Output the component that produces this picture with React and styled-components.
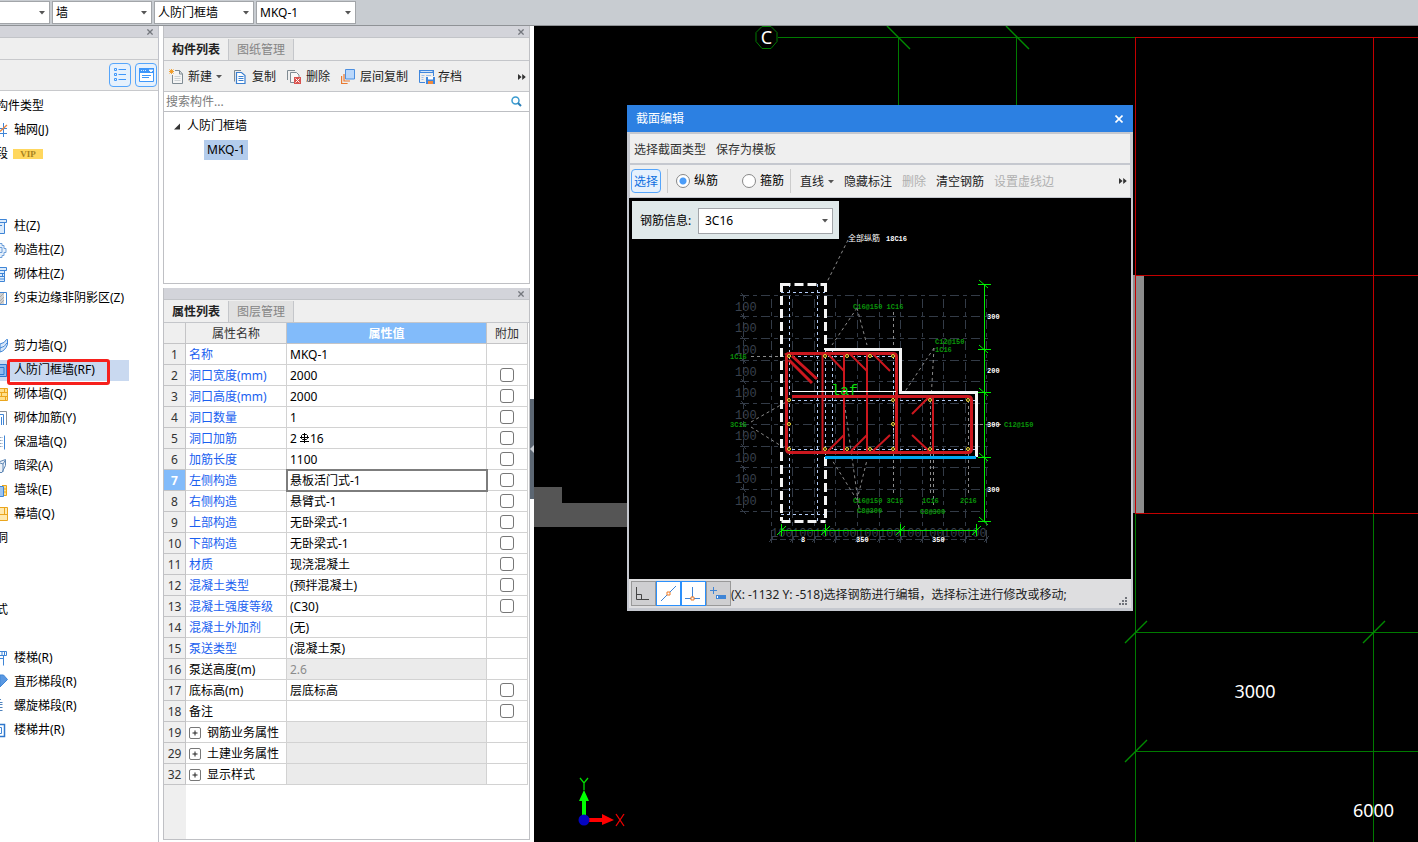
import React from "react";
import styled, { createGlobalStyle, css } from "styled-components";

const GlobalStyle = createGlobalStyle`
  *, *::before, *::after { box-sizing: border-box; }
  body {
    margin: 0;
    background: #fff;
    color: #000;
    font: 12px/16px "Noto Sans", "Noto Sans CJK SC", sans-serif;
  }
  button, input, select { font: inherit; color: inherit; margin: 0; }
  button { padding: 0; border: 0; background: none; white-space: nowrap; }
  ul { list-style: none; margin: 0; padding: 0; }
`;

/* ---------- shell ---------- */

const Shell = styled.div`
  display: flex;
  flex-direction: column;
  min-height: 100vh;
  overflow: hidden;
`;

const TopBar = styled.header`
  display: flex;
  gap: 2px;
  height: 26px;
  margin-left: -50px;
  padding-top: 1px;
  background: #c8ccd1;
  border-bottom: 1px solid #8f9296;
`;

const Workspace = styled.main`
  display: flex;
  flex: 1;
`;

const ComboFrame = styled.div`
  position: relative;
  width: ${(p) => p.$width}px;
  height: ${(p) => p.$height}px;
`;

const ComboSelect = styled.select`
  appearance: none;
  width: 100%;
  height: 100%;
  padding: 0 14px 0 ${(p) => p.$indent}px;
  border: 1px solid #a2a5a9;
  border-radius: 0;
  background: #fff;
`;

const ComboCaret = styled.svg`
  position: absolute;
  right: 5px;
  top: calc(50% - 2px);
  pointer-events: none;
`;

function Combo({ label, value, width = 100, height = 23, indent = 3, id }) {
  return (
    <ComboFrame $width={width} $height={height}>
      <ComboSelect aria-label={label} id={id} $indent={indent} defaultValue={value}>
        <option>{value}</option>
      </ComboSelect>
      <ComboCaret width="6" height="4" viewBox="0 0 6 4">
        <path d="M0 0h6L3 3.600z" fill="#555" />
      </ComboCaret>
    </ComboFrame>
  );
}

const PanelStrip = styled.div`
  display: flex;
  justify-content: flex-end;
  align-items: center;
  height: 12px;
  padding: 1px 5px 0 0;
  background: #d3d4da;
  border-bottom: 1px solid #c2c4c8;
`;

const CloseButton = styled.button`
  display: flex;
`;

function Strip({ name }) {
  return (
    <PanelStrip>
      <CloseButton aria-label={`关闭${name}`}>
        <svg width="6" height="6" viewBox="0 0 6 6">
          <path d="M.4.4l5.200 5.200M5.600.4L.4 5.600" stroke="#74777d" strokeWidth="1.300" />
        </svg>
      </CloseButton>
    </PanelStrip>
  );
}

/* ---------- left navigation ---------- */

const NavPanel = styled.aside`
  width: 159px;
  flex: none;
  overflow: hidden;
  border-right: 1px solid #bfc1c9;
  background: #fff;
`;

const NavHeading = styled.div`
  height: 22px;
  background: #efefef;
  border-bottom: 1px solid #c8c9cc;
`;

const NavTools = styled.div`
  display: flex;
  justify-content: flex-end;
  align-items: center;
  gap: 4px;
  height: 31px;
  padding-right: 1px;
  background: #efefef;
  border-bottom: 1px solid #c8c9cc;
`;

const ViewButton = styled.button`
  display: flex;
  align-items: center;
  justify-content: center;
  width: 22px;
  height: 24px;
  border: 1px solid #55a5fb;
  border-radius: 4px;
  background: #e6f1fd;
`;

const NavList = styled.ul`
  margin-top: 3px;
`;

const NavItem = styled.li`
  position: relative;
  display: flex;
  align-items: center;
  gap: 5px;
  height: 24px;
  white-space: nowrap;
`;

const NavGroup = styled(NavItem)`
  margin-left: -4px;
`;

const NavHighlight = styled.span`
  display: flex;
  align-items: center;
  gap: 5px;
  width: 129px;
  height: 21px;
  background: #c9d9f0;
`;

const Marker = styled.span`
  position: absolute;
  left: 7px;
  top: 1px;
  width: 103px;
  height: 26px;
  border: 3px solid #f6201c;
  border-radius: 3px;
`;

const VipBadge = styled.span`
  width: 30px;
  height: 10px;
  background: #ffd75e;
  color: #a8821f;
  font: bold 9px/10px "Liberation Serif", serif;
  text-align: center;
`;

const B = "#3f85d6";
const navGlyphs = {
  grid: (
    <g fill="none">
      <path d="M3.500 1v14M0 6.500h7M0 11.500h7" stroke={B} />
      <path d="M0 9.500L7 3" stroke="#e9833c" strokeWidth="1.300" />
    </g>
  ),
  column: <path d="M0 1.500h6.500v3H0M0 4.500h4.500v11H0M0 7.500h2" fill="#dcebfb" stroke={B} />,
  ring: <path d="M0 1.500h2v2h2v3h2v4H4v3H2v2H0M0 5.500h2v5H0" fill="#e6f0fb" stroke="#6e9fd9" />,
  brickColumn: (
    <g>
      <path d="M0 1.500h6.500v3H0M0 4.500h4.500v11H0" fill="#dcebfb" stroke={B} />
      <path d="M0 7.500h4M0 10.500h4M2.500 7v3M0 13h4" stroke={B} />
    </g>
  ),
  hatch: (
    <g>
      <path d="M0 2.500h6.500v12H0" fill="#fff" stroke={B} />
      <path d="M0 3h4v11H0z" fill="#cfcfcf" />
      <path d="M0 7l4-4M0 11l4-4M0 14l4-4" stroke="#999" strokeWidth=".7" />
    </g>
  ),
  curve: <path d="M0 6q5-1 6.500-4.500h1v5Q5 13 0 14V6M0 10q5-1 7-5" fill="#d7e6f8" stroke={B} />,
  frame: (
    <g>
      <path d="M0 2h7v13H0z" fill="#8fbcf0" />
      <path d="M0 2.500h6.500v12H0M0 5.500h4v7H0" fill="none" stroke="#2f77cc" />
    </g>
  ),
  brick: (
    <g>
      <path d="M0 2.500h7.500v12H0" fill="#ffe08a" stroke="#eaa51d" />
      <path d="M0 6.500h7M0 10.500h7M4.500 3v4M1.500 7v4M5.500 11v3" stroke="#eaa51d" />
    </g>
  ),
  bars: (
    <g fill="none">
      <path d="M0 1.500h6.500V15" stroke="#8a9199" />
      <path d="M0 4.500h3.500V15M1.500 7v8" stroke={B} />
    </g>
  ),
  insulation: (
    <g fill="none">
      <path d="M4.500 1.500v14" stroke={B} />
      <path d="M0 3.500h3M0 6.500h3M0 9.500h3M0 12.500h3" stroke="#8ba3bf" strokeDasharray="1.500 1" />
    </g>
  ),
  beam: <path d="M0 3.500l5.500-2v6L2 14.500H0M0 5l3 1v8M3 6l2.500-4" fill="#edf2f8" stroke="#5f87b5" />,
  pier: (
    <g>
      <path d="M2 3.500h4.500v10H2" fill="#ffe08a" stroke="#eaa51d" />
      <path d="M0 4.500h3.500v10H0" fill="#9cc4f2" stroke={B} />
      <path d="M4 7h3M4 10h3" stroke="#eaa51d" />
    </g>
  ),
  curtain: (
    <g>
      <path d="M0 1.500h7.500v13H0" fill="#ffe9ae" stroke="#eaa51d" />
      <path d="M0 8.500h7M4.500 2v6" stroke="#eaa51d" />
    </g>
  ),
  stair: <path d="M0 1.500h6.500v4H0M3.500 5.500v10M0 8.500h3M2 2v3M4.500 2v3" fill="none" stroke={B} />,
  flight: <path d="M0 1l3.500 0 4 4.500L0 13z" fill="#5a98e2" stroke={B} />,
  spiral: <path d="M0 1.500h1M0 4.500h2.500M0 6.500h2.500M0 9.500h2.500M0 12.500h2.500" fill="none" stroke="#4f83bd" />,
  well: (
    <g fill="none">
      <path d="M0 2.500h4.500v12H0" stroke="#2f77cc" strokeWidth="1.500" />
      <path d="M0 5.500h1.500v6H0" stroke={B} />
    </g>
  ),
};

const navRows = [
  { group: "构件类型" },
  { icon: "grid", text: "轴网(J)" },
  { group: "段", vip: true },
  {}, {},
  { icon: "column", text: "柱(Z)" },
  { icon: "ring", text: "构造柱(Z)" },
  { icon: "brickColumn", text: "砌体柱(Z)" },
  { icon: "hatch", text: "约束边缘非阴影区(Z)" },
  {},
  { icon: "curve", text: "剪力墙(Q)" },
  { icon: "frame", text: "人防门框墙(RF)", selected: true },
  { icon: "brick", text: "砌体墙(Q)" },
  { icon: "bars", text: "砌体加筋(Y)" },
  { icon: "insulation", text: "保温墙(Q)" },
  { icon: "beam", text: "暗梁(A)" },
  { icon: "pier", text: "墙垛(E)" },
  { icon: "curtain", text: "幕墙(Q)" },
  { group: "洞" },
  {}, {},
  { group: "式" },
  {},
  { icon: "stair", text: "楼梯(R)" },
  { icon: "flight", text: "直形梯段(R)" },
  { icon: "spiral", text: "螺旋梯段(R)" },
  { icon: "well", text: "楼梯井(R)" },
];

function NavRow({ row }) {
  if (row.group) {
    return (
      <NavGroup>
        {row.group}
        {row.vip && <VipBadge>VIP</VipBadge>}
      </NavGroup>
    );
  }
  if (!row.text) return <NavItem />;
  const body = (
    <>
      <svg width="9" height="16" viewBox="0 0 9 16">{navGlyphs[row.icon]}</svg>
      <span>{row.text}</span>
    </>
  );
  return (
    <NavItem>
      {row.selected ? <NavHighlight>{body}</NavHighlight> : body}
      {row.selected && <Marker />}
    </NavItem>
  );
}

/* ---------- component list and property list ---------- */

const MiddleColumn = styled.div`
  position: relative;
  display: flex;
  flex-direction: column;
  gap: 4px;
  flex: none;
  width: 375px;
  padding: 0 4px 2px;
`;

const Panel = styled.section`
  display: flex;
  flex-direction: column;
  flex: ${(p) => (p.$grow ? 1 : "none")};
  width: 367px;
  border: 1px solid #bfc0c4;
  border-top: 0;
  background: #efefef;
`;

const Tabs = styled.div`
  display: flex;
  height: 23px;
  padding-top: 1px;
  border-bottom: 1px solid #c4c6ca;
`;

const Tab = styled.button`
  width: 65px;
  border-right: 1px solid #c4c6ca;
  color: #222;
  font-weight: 600;
  ${(p) =>
    !p.$active &&
    css`
      background: #e1e1e1;
      color: #858585;
      font-weight: 400;
    `}
`;

const Toolbar = styled.div`
  display: flex;
  align-items: center;
  gap: 11px;
  height: 31px;
  padding: 1px 3px 0 5px;
  border-bottom: 1px solid #c4c6ca;
  color: #222;
`;

const ToolButton = styled.button`
  display: flex;
  align-items: center;
  gap: 3px;
  svg { flex: none; }
`;

const MoreButton = styled(ToolButton)`
  margin-left: auto;
`;

const SearchRow = styled.label`
  display: flex;
  align-items: center;
  height: 20px;
  padding: 0 7px 0 2px;
  background: #fff;
  border-bottom: 1px solid #bdbfc3;
`;

const SearchInput = styled.input`
  flex: 1;
  min-width: 0;
  padding: 0;
  border: 0;
  outline: 0;
  background: none;
  &::placeholder { color: #7b7b7b; opacity: 1; }
`;

const Tree = styled.ul`
  min-height: 171px;
  padding: 2px 0 0 9px;
  background: #fff;
`;

const TreeRow = styled.li`
  display: flex;
  align-items: center;
  gap: 3px;
  height: 24px;
  padding-left: ${(p) => (p.$child ? 31 : 0)}px;
`;

const TreeLabel = styled.span`
  height: 20px;
  padding: 2px 3px;
  background: ${(p) => (p.$selected ? "#b3ccec" : "none")};
`;

const MoreGlyph = () => (
  <svg width="8" height="6" viewBox="0 0 8 6">
    <path d="M0 0l3.600 3L0 6zM4.200 0l3.600 3-3.600 3z" fill="#333" />
  </svg>
);

const DropGlyph = () => (
  <svg width="7" height="4" viewBox="0 0 7 4">
    <path d="M1 0h6L4 3.300z" fill="#555" />
  </svg>
);

const toolGlyphs = {
  add: (
    <g>
      <path d="M3.500 6V14.500H13.500V5L10.500 1.500H6" fill="#f4f4f4" stroke="#7f8b93" />
      <path d="M10.500 1.500V5h3" fill="none" stroke="#7f8b93" />
      <path d="M5.500 7.500h6M5.500 9.500h6M5.500 11.500h6" stroke="#ccd1d4" />
      <path d="M.5.5l4 4M4.500.5l-4 4M2.500 0v5M0 2.500h5" stroke="#f0971e" strokeWidth=".9" />
    </g>
  ),
  copy: (
    <g fill="none">
      <path d="M1.500 12.500V1.500h6.500" stroke="#7f8b93" />
      <path d="M3.500 3.500h5l3.500 3v8H3.500z" fill="#fff" stroke="#3a7fd0" strokeWidth="1.200" />
      <path d="M5.500 7.500h5M5.500 9.500h5M5.500 11.500h5" stroke="#3a7fd0" />
    </g>
  ),
  remove: (
    <g fill="none">
      <path d="M.5 11V1.500H8" stroke="#7f8b93" />
      <path d="M7 13.500H3.500v-10h6l2.500 2.500v2" fill="#f7f7f7" stroke="#7f8b93" />
      <path d="M7 8h7v7H7z" fill="#d9534f" />
      <path d="M8.500 9.500l4 4M12.500 9.500l-4 4" stroke="#fff" />
    </g>
  ),
  layers: (
    <g fill="none">
      <path d="M.6 7v7.500h6" stroke="#e9792f" strokeWidth="1.200" />
      <path d="M3 5v7h6" stroke="#e9792f" strokeWidth="1.200" />
      <path d="M4.500.5h9v9.500h-9z" fill="#b9d7fb" stroke="#4b8fe0" />
    </g>
  ),
  archive: (
    <g>
      <path d="M0 1h15v3H0z" fill="#3f86dd" />
      <path d="M1.500 2.500h12" stroke="#cfe2f8" />
      <path d="M.5 4v9.500H6M14.500 4v3" stroke="#3f86dd" fill="none" />
      <path d="M2.500 6.500h3M2.500 8.500h2M2.500 10.500h2M7 6.500h5" stroke="#9dbfe9" />
      <path d="M7 8h9v7H7z" fill="#3f86dd" />
      <path d="M9 8h5v2.500H9z" fill="#fff" />
      <path d="M9 12h5v3H9z" fill="#f08a3c" />
    </g>
  ),
};

function Tool({ icon, label, drop }) {
  return (
    <ToolButton>
      <svg width="16" height="16" viewBox="0 0 16 16">{toolGlyphs[icon]}</svg>
      {label}
      {drop && <DropGlyph />}
    </ToolButton>
  );
}

const TableArea = styled.div`
  flex: 1;
  background: linear-gradient(to right, #efefef 22px, #fff 22px);
`;

const PropertyTable = styled.table`
  table-layout: fixed;
  width: 364px;
  border-collapse: separate;
  border-spacing: 0;
`;

const cell = css`
  height: 21px;
  padding: 1px 3px 0;
  border-right: 1px solid #d2d2d2;
  border-bottom: 1px solid #d2d2d2;
  font-weight: 400;
  white-space: nowrap;
`;

const HeadCell = styled.th`
  ${cell}
  border-color: #c4c4c6;
  background: ${(p) => (p.$accent ? "#82bbfa" : "#efefef")};
  color: ${(p) => (p.$accent ? "#fff" : "#333")};
  font-weight: ${(p) => (p.$accent ? 700 : 400)};
`;

const NumberCell = styled.th`
  ${cell}
  padding: 1px 0 0;
  border-color: #c4c4c6;
  text-align: center;
  background: ${(p) => (p.$current ? "#82bbfa" : "#efefef")};
  color: ${(p) => (p.$current ? "#fff" : "#333")};
  font-weight: ${(p) => (p.$current ? 700 : 400)};
`;

const NameCell = styled.td`
  ${cell}
  color: ${(p) => (p.$link ? "#1a5ff0" : "#000")};
`;

const ValueCell = styled.td`
  ${cell}
  background: ${(p) => (p.$locked ? "#ebebeb" : "#fff")};
  color: ${(p) => (p.$locked ? "#8b8b8b" : "#000")};
  ${(p) => p.$current && "outline: 2px solid #7d7d7d; outline-offset: -1px;"}
`;

const CheckCell = styled.td`
  ${cell}
  padding: 0;
`;

const Tick = styled.input`
  appearance: none;
  display: block;
  width: 14px;
  height: 14px;
  margin: 0 auto;
  border: 1px solid #777;
  border-radius: 3px;
  background: #fff;
`;

const Inline = styled.span`
  display: flex;
  align-items: center;
  gap: ${(p) => p.$gap}px;
`;

const Expander = styled.button`
  display: flex;
  align-items: center;
  justify-content: center;
  width: 12px;
  height: 12px;
  border: 1px solid #777;
  border-radius: 2px;
  background: #fff;
`;

const Rebar = () => (
  <Inline $gap={1}>
    2
    <svg width="11" height="12" viewBox="0 0 11 12">
      <path d="M6.500 0v10M2 8.500h9M2 4.500h9M4.500 1.500h4l1 1v3l-1 1h-4l-1-1v-3z" fill="none" stroke="#000" />
    </svg>
    16
  </Inline>
);

const properties = [
  { n: 1, name: "名称", value: "MKQ-1", link: true },
  { n: 2, name: "洞口宽度(mm)", value: "2000", link: true, tick: true },
  { n: 3, name: "洞口高度(mm)", value: "2000", link: true, tick: true },
  { n: 4, name: "洞口数量", value: "1", link: true, tick: true },
  { n: 5, name: "洞口加筋", value: <Rebar />, link: true, tick: true },
  { n: 6, name: "加筋长度", value: "1100", link: true, tick: true },
  { n: 7, name: "左侧构造", value: "悬板活门式-1", link: true, tick: true, current: true },
  { n: 8, name: "右侧构造", value: "悬臂式-1", link: true, tick: true },
  { n: 9, name: "上部构造", value: "无卧梁式-1", link: true, tick: true },
  { n: 10, name: "下部构造", value: "无卧梁式-1", link: true, tick: true },
  { n: 11, name: "材质", value: "现浇混凝土", link: true, tick: true },
  { n: 12, name: "混凝土类型", value: "(预拌混凝土)", link: true, tick: true },
  { n: 13, name: "混凝土强度等级", value: "(C30)", link: true, tick: true },
  { n: 14, name: "混凝土外加剂", value: "(无)", link: true },
  { n: 15, name: "泵送类型", value: "(混凝土泵)", link: true },
  { n: 16, name: "泵送高度(m)", value: "2.6", locked: true },
  { n: 17, name: "底标高(m)", value: "层底标高", tick: true },
  { n: 18, name: "备注", value: "", tick: true },
  { n: 19, name: "钢筋业务属性", group: true, locked: true },
  { n: 29, name: "土建业务属性", group: true, locked: true },
  { n: 32, name: "显示样式", group: true, locked: true },
];

function PropertyRow({ p }) {
  return (
    <tr>
      <NumberCell scope="row" $current={p.current}>{p.n}</NumberCell>
      <NameCell $link={p.link}>
        {p.group ? (
          <Inline $gap={6}>
            <Expander aria-label={`展开${p.name}`}>
              <svg width="6" height="6" viewBox="0 0 6 6">
                <path d="M3 .5v5M.5 3h5" stroke="#222" />
              </svg>
            </Expander>
            {p.name}
          </Inline>
        ) : (
          p.name
        )}
      </NameCell>
      <ValueCell $locked={p.locked} $current={p.current}>{p.value}</ValueCell>
      <CheckCell>{p.tick && <Tick type="checkbox" aria-label={`附加 ${p.n}`} />}</CheckCell>
    </tr>
  );
}

const Splitter = styled.div`
  position: absolute;
  right: 0;
  top: 373px;
  display: flex;
  align-items: center;
  width: 4px;
  height: 100px;
  background: #5c6773;
`;

/* ---------- drawing area ---------- */

const Canvas = styled.section`
  position: relative;
  flex: 1;
  min-width: 0;
  overflow: hidden;
  background: #000;
`;

const Plan = styled.svg`
  position: absolute;
  inset: 0;
  width: 100%;
  height: 100%;
`;

const G = "#007a00";

function PlanDrawing() {
  return (
    <Plan aria-label="平面图">
      <g transform="translate(-534 -26)" fill="none" shapeRendering="crispEdges">
        <path d="M778 37.500H1135M898 37.500V110M1016.500 37.500V110" stroke={G} />
        <path d="M1135.500 513V842M1373.500 513V842M1135 632.500H3000M1135 751.500H3000" stroke={G} />
        <path d="M534 487h28v16h80v24H534z" fill="#555" />
        <path d="M1133 275h11v238h-11z" fill="#8c8c8c" />
        <path d="M1135.500 37V513M1373.500 37V513M1135 37.500H3000M1135 275.500H3000M1135 513.500H3000" stroke="#c40000" />
      </g>
      <g transform="translate(-534 -26)" fill="none" stroke="#008c00" strokeWidth="1.400">
        <path d="M887 26l23 23M1006 26l23 23M1125 643l22-22M1363 643l22-22M1125 762l22-22" />
      </g>
      <g transform="translate(-534 -26)" fontFamily="Noto Sans, sans-serif">
        <path d="M762 26.500h9l6 6v9l-6 7h-9l-6-7v-9z" fill="#000" stroke={G} />
        <text x="766.500" y="44" fontSize="18" fill="#fff" textAnchor="middle">C</text>
        <text x="1255" y="698" fontSize="18" fill="#fff" textAnchor="middle">3000</text>
        <text x="1373.500" y="817" fontSize="18" fill="#fff" textAnchor="middle">6000</text>
        <path d="M582 818V801h-3l5-11 5 11h-3v17z" fill="#0f0" />
        <path d="M586 818h16v-4l12 6-12 5v-3h-16z" fill="#f00" />
        <circle cx="584" cy="820" r="5.500" fill="#0404c0" />
        <path d="M580 778l4 5 4-5M584 783v7" stroke="#0d0" strokeWidth="1.300" fill="none" />
        <path d="M616 814l8 12M624 814l-8 12" stroke="#e00" strokeWidth="1.300" fill="none" />
      </g>
    </Plan>
  );
}

/* ---------- section editor window ---------- */

const Dialog = styled.div`
  position: absolute;
  left: 93px;
  top: 79px;
  width: 506px;
  border: 2px solid #c5c8cf;
  border-top: 0;
  border-bottom-width: 3px;
  background: #c5c8cf;
`;

const DialogTitle = styled.div`
  display: flex;
  align-items: center;
  justify-content: space-between;
  height: 27px;
  margin: 0 -2px 2px;
  padding: 0 10px 0 9px;
  background: #2c80e2;
  color: #fff;
`;

const DialogMenu = styled.div`
  display: flex;
  align-items: center;
  gap: 10px;
  height: 29px;
  margin: 0 1px 2px;
  padding: 2px 4px 0;
  background: #efefef;
  color: #333;
`;

const DialogTools = styled.div`
  display: flex;
  align-items: center;
  height: 32px;
  margin: 0 1px 1px;
  padding: 0 3px 0 1px;
  background: #efefef;
  color: #222;
`;

const SelectMode = styled.button`
  width: 30px;
  height: 24px;
  padding-top: 2px;
  border: 1px solid #55a5fb;
  border-radius: 4px;
  background: #e6f1fd;
  color: #0d6fe0;
`;

const Divider = styled.span`
  width: 1px;
  height: 24px;
  margin: 0 ${(p) => p.$gap}px 0 6px;
  background: #ccc;
`;

const RadioLabel = styled.label`
  display: flex;
  align-items: center;
  gap: 4px;
  margin-right: ${(p) => (p.$spaced ? 24 : 0)}px;
  color: #000;
`;

const Radio = styled.input`
  appearance: none;
  width: 14px;
  height: 14px;
  border: 1px solid #888;
  border-radius: 50%;
  background: #fff;
  &:checked { background: radial-gradient(circle, #4a9cf8 3px, #fff 4px); }
`;

const Commands = styled.div`
  display: flex;
  gap: 10px;
  padding-top: 2px;
`;

const Command = styled.button`
  display: flex;
  align-items: center;
  gap: 3px;
  &:disabled { color: #b0b0b0; }
`;

const SectionView = styled.div`
  position: relative;
  height: 381px;
  background: #000;
`;

const SectionSvg = styled.svg`
  display: block;
  width: 100%;
  height: 100%;
`;

const RebarBox = styled.div`
  position: absolute;
  left: 3px;
  top: 3px;
  display: flex;
  align-items: center;
  justify-content: space-between;
  width: 207px;
  height: 38px;
  padding: 1px 6px 0 8px;
  background: #e0e9ea;
`;

const StatusBar = styled.div`
  display: flex;
  align-items: center;
  height: 29px;
  padding: 0 4px 0 2px;
  background: #dedee0;
  color: #222;
`;

const StatusText = styled.span`
  padding-top: 2px;
`;

const SnapButton = styled.button`
  display: flex;
  align-items: center;
  justify-content: center;
  width: 25px;
  height: 25px;
  border: 1px solid ${(p) => (p.$on ? "#2b90fb" : "#999")};
  background: ${(p) => (p.$on ? "#fff" : "#cfcfd1")};
`;

const Grip = styled.svg`
  margin: 14px 0 0 auto;
`;

const gridX = [771, 792, 814, 835, 857, 879, 900, 922, 943, 965, 986];
const gridY = [295, 316, 338, 360, 381, 403, 424, 446, 467, 489, 511];
const barPoints = [
  [789, 356], [825, 356], [847, 356], [870, 356], [893, 356],
  [789, 400], [893, 400], [930, 400], [968, 400],
  [789, 424], [893, 424],
  [789, 449], [825, 449], [847, 449], [870, 449], [893, 449], [930, 449], [968, 449],
];
const greenNotes = [
  [730, 359, "1C16"], [730, 427, "3C16"], [853, 309, "C16@150 1C16"],
  [935, 344, "C12@150"], [935, 352, "1C16"], [1004, 427, "C12@150"],
  [853, 503, "C16@150 3C16"], [857, 513, "C8@300"], [922, 503, "1C16"],
  [920, 514, "C8@300"], [960, 503, "2C16"],
];
const whiteNotes = [
  [987, 319, "300"], [987, 373, "200"], [987, 427, "300"], [987, 492, "300"],
  [801, 542, "8"], [856, 542, "350"], [932, 542, "350"],
];

function SectionDrawing() {
  return (
    <SectionSvg viewBox="629 198 502 381" preserveAspectRatio="xMinYMin" aria-label="截面图">
      <g fill="none" stroke="#333b47" shapeRendering="crispEdges">
        {gridX.map((x) => <path key={x} d={`M${x}.500 299V540`} strokeDasharray="9 4 4 4" />)}
        {gridY.map((y) => <path key={y} d={`M740 ${y}.500H988`} strokeDasharray="9 4 4 4" />)}
        <path d="M743.500 295V511M771 539.500H986" strokeDasharray="6 3" />
        {gridX.map((x) => <path key={x} d={`M${x - 2} 542l5-6M${x}.500 536v7`} />)}
        {gridY.map((y) => <path key={y} d={`M741 ${y - 2}l5 5`} />)}
      </g>
      <g fill="#39414d" fontFamily="Liberation Mono, monospace" fontSize="12">
        {gridY.slice(0, 10).map((y) => <text key={y} x="735" y={y + 16}>100</text>)}
        {gridX.slice(0, 10).map((x) => <text key={x} x={x} y="537">100</text>)}
      </g>

      <g fill="none" stroke="#b4cdf8" strokeDasharray="3 3" shapeRendering="crispEdges">
        <path d="M789.500 284V521M817.500 284V521M781 292.500H825M781 514.500H825" />
        <path d="M825.500 350V457M832.500 350V451M786 356.500H896M786 400.500H976M786 449.500H976M893.500 356V449M968.500 400V449" />
      </g>

      <g fill="none" stroke="#8b8b8b" strokeDasharray="3 3">
        <path d="M848 240L826 284M857 308L832 345M857 308l10 37M893.500 312V353M934 348L904 393M934 348L931 400" />
        <path d="M751 356.500H785M751 422l35-20M751 427l35 22" />
        <path d="M857 500L832 460M857 500l10-40M859 508L844 400M893.500 400V496M930.500 400V496M933.500 424V506M968.500 400V496M968 424.500H1003" />
      </g>

      <g fill="none" stroke="#f4f4f4" strokeWidth="3">
        <path d="M781.500 284.500H825.500M781.500 521.500H825.500" strokeDasharray="9 4" />
        <path d="M781.500 283V521M825.500 283V350M825.500 457V521" strokeDasharray="9 4" />
        <path d="M825 349.500H900.500V392.500H976.500V457" />
      </g>
      <path d="M825 457.500H976" stroke="#00a8f4" strokeWidth="3" />

      <g fill="none" stroke="#cb171e">
        <path d="M789 353.500H893q3.500 0 3.500 3.500V452.500M786.500 356V449q0 3.500 3.500 3.500H968q3.500 0 3.500-3.500V400q0-3.500-3.500-3.500H792M785 355l4-2" strokeWidth="3" />
        <path d="M822.500 354V452M844 354V452M867 354V452M933 397V452" strokeWidth="2" />
        <path d="M789 360l23 23M792 356l25 23" strokeWidth="3" />
        <path d="M828 354l16 17M850 354l17 17M873 354l17 17M844 435l-16 16M867 435l-16 16M890 435l-17 16M929 397l-17 17M912 435l17 16" strokeWidth="2" />
      </g>
      <path d="M792 391.500H896" stroke="#fff" />

      <g fill="#201008" stroke="#f0df3a">
        {barPoints.map(([x, y]) => <circle key={`${x}-${y}`} cx={x} cy={y} r="1.500" />)}
      </g>

      <g fill="none" stroke="#00f000">
        <path d="M984.500 284V521M978 284.500H991M978 349.500H991M978 392.500H991M978 457.500H991M978 521.500H991" />
        <path d="M979 280l9 8M979 345l9 8M979 388l9 8M979 453l9 8M979 517l9 8" />
        <path d="M781 530.500H976M781.500 524v12M825.500 524v12M900.500 524v12M976.500 524v12" />
        <path d="M777 535l9-9M821 535l9-9M896 535l9-9M972 535l9-9" />
      </g>

      <text x="831" y="395" fill="#0ddc0d" fontFamily="Liberation Mono, monospace" fontSize="15">laf</text>
      <g fontFamily="Liberation Mono, monospace" fontSize="7" fontWeight="700">
        <g fill="#0a960a">
          {greenNotes.map(([x, y, t]) => <text key={`${x}-${y}`} x={x} y={y}>{t}</text>)}
        </g>
        <g fill="#fff">
          {whiteNotes.map(([x, y, t]) => <text key={`${x}-${y}`} x={x} y={y}>{t}</text>)}
          <text x="886" y="241">18C16</text>
        </g>
      </g>
      <text x="848" y="241" fill="#fff" fontSize="8" fontFamily="Noto Sans CJK SC, sans-serif">全部纵筋</text>
    </SectionSvg>
  );
}

function SectionEditor() {
  return (
    <Dialog role="dialog" aria-label="截面编辑">
      <DialogTitle>
        截面编辑
        <CloseButton aria-label="关闭">
          <svg width="8" height="8" viewBox="0 0 8 8">
            <path d="M.5.5l7 7M7.500.5l-7 7" stroke="#fff" strokeWidth="1.600" />
          </svg>
        </CloseButton>
      </DialogTitle>
      <DialogMenu>
        <button>选择截面类型</button>
        <button>保存为模板</button>
      </DialogMenu>
      <DialogTools>
        <SelectMode>选择</SelectMode>
        <Divider $gap={8} />
        <RadioLabel $spaced>
          <Radio type="radio" name="bar" defaultChecked />
          纵筋
        </RadioLabel>
        <RadioLabel>
          <Radio type="radio" name="bar" />
          箍筋
        </RadioLabel>
        <Divider $gap={9} />
        <Commands>
          <Command>直线<DropGlyph /></Command>
          <Command>隐藏标注</Command>
          <Command disabled>删除</Command>
          <Command>清空钢筋</Command>
          <Command disabled>设置虚线边</Command>
        </Commands>
        <MoreButton aria-label="更多"><MoreGlyph /></MoreButton>
      </DialogTools>
      <SectionView>
        <SectionDrawing />
        <RebarBox>
          <label htmlFor="rebar-info">钢筋信息:</label>
          <Combo id="rebar-info" value="3C16" width={135} height={26} indent={6} />
        </RebarBox>
      </SectionView>
      <StatusBar>
        <SnapButton aria-label="正交">
          <svg width="17" height="17" viewBox="0 0 17 17">
            <path d="M1.500 2v12.500H14M1.500 9.500h5v5" fill="none" stroke="#444" />
          </svg>
        </SnapButton>
        <SnapButton $on aria-label="中点捕捉">
          <svg width="17" height="17" viewBox="0 0 17 17">
            <path d="M1 16L16 1" stroke="#3f85d6" />
            <path d="M7 7h3v3H7z" fill="#fff" stroke="#ee7a24" />
          </svg>
        </SnapButton>
        <SnapButton $on aria-label="垂足捕捉">
          <svg width="17" height="17" viewBox="0 0 17 17">
            <path d="M7.500 2v12M0 13.500h15" stroke="#3f85d6" />
            <path d="M6 12h3v3H6z" fill="#fff" stroke="#ee7a24" />
          </svg>
        </SnapButton>
        <SnapButton aria-label="动态输入">
          <svg width="17" height="17" viewBox="0 0 17 17">
            <path d="M3.500 2v7M0 5.500h7" stroke="#3f85d6" />
            <path d="M6 10h10v4H6z" fill="#3f85d6" />
            <path d="M7.500 11v2" stroke="#fff" />
          </svg>
        </SnapButton>
        <StatusText>(X: -1132 Y: -518)选择钢筋进行编辑，选择标注进行修改或移动;</StatusText>
        <Grip width="8" height="8" viewBox="0 0 8 8">
          <path d="M6 0h2v2H6zM3 3h2v2H3zM6 3h2v2H6zM0 6h2v2H0zM3 6h2v2H3zM6 6h2v2H6z" fill="#70737a" />
        </Grip>
      </StatusBar>
    </Dialog>
  );
}

/* ---------- page ---------- */

export default function App() {
  return (
    <Shell>
      <GlobalStyle />
      <TopBar>
        <Combo label="楼层" value="" />
        <Combo label="构件大类" value="墙" />
        <Combo label="构件类型" value="人防门框墙" />
        <Combo label="构件" value="MKQ-1" />
      </TopBar>
      <Workspace>
        <NavPanel>
          <Strip name="导航" />
          <NavHeading />
          <NavTools>
            <ViewButton aria-label="列表视图">
              <svg width="12" height="14" viewBox="0 0 12 14">
                <path d="M.5.5h2v2h-2zM.5 5.500h2v2h-2zM.5 10.500h2v2h-2zM4.500 1.500H12M4.500 6.500H12M4.500 11.500H12" fill="none" stroke="#3f97fa" />
              </svg>
            </ViewButton>
            <ViewButton aria-label="面板视图">
              <svg width="15" height="14" viewBox="0 0 15 14">
                <path d="M.5.5h14v13H.5z" fill="#fff" stroke="#3f97fa" />
                <path d="M0 0h15v5H0z" fill="#3f97fa" />
                <path d="M2 2.500h1M4 2.500h1M6 2.500h1M10 2h4l-2 2z" stroke="#fff" fill="#fff" strokeWidth=".8" />
                <path d="M3 7.500h9M3 9.500h7" stroke="#3f97fa" />
              </svg>
            </ViewButton>
          </NavTools>
          <NavList>
            {navRows.map((row, i) => <NavRow key={i} row={row} />)}
          </NavList>
        </NavPanel>

        <MiddleColumn>
          <Panel>
            <Strip name="构件列表" />
            <Tabs>
              <Tab $active>构件列表</Tab>
              <Tab>图纸管理</Tab>
            </Tabs>
            <Toolbar>
              <Tool icon="add" label="新建" drop />
              <Tool icon="copy" label="复制" />
              <Tool icon="remove" label="删除" />
              <Tool icon="layers" label="层间复制" />
              <Tool icon="archive" label="存档" />
              <MoreButton aria-label="更多"><MoreGlyph /></MoreButton>
            </Toolbar>
            <SearchRow>
              <SearchInput aria-label="搜索构件" placeholder="搜索构件..." />
              <svg width="11" height="11" viewBox="0 0 11 11">
                <circle cx="4.500" cy="4.500" r="3.500" fill="none" stroke="#3a9bd0" strokeWidth="1.500" />
                <path d="M7 7l3 3" stroke="#2b7fb8" strokeWidth="2" />
              </svg>
            </SearchRow>
            <Tree>
              <TreeRow>
                <svg width="8" height="7" viewBox="0 0 8 7">
                  <path d="M7 .5v6H1z" fill="#333" />
                </svg>
                <TreeLabel>人防门框墙</TreeLabel>
              </TreeRow>
              <TreeRow $child>
                <TreeLabel $selected>MKQ-1</TreeLabel>
              </TreeRow>
            </Tree>
          </Panel>

          <Panel $grow>
            <Strip name="属性列表" />
            <Tabs>
              <Tab $active>属性列表</Tab>
              <Tab>图层管理</Tab>
            </Tabs>
            <TableArea>
              <PropertyTable>
                <colgroup>
                  <col width="22" />
                  <col width="101" />
                  <col width="200" />
                  <col width="41" />
                </colgroup>
                <thead>
                  <tr>
                    <HeadCell aria-label="序号" />
                    <HeadCell>属性名称</HeadCell>
                    <HeadCell $accent>属性值</HeadCell>
                    <HeadCell>附加</HeadCell>
                  </tr>
                </thead>
                <tbody>
                  {properties.map((p) => <PropertyRow key={p.n} p={p} />)}
                </tbody>
              </PropertyTable>
            </TableArea>
          </Panel>
          <Splitter>
            <svg width="4" height="8" viewBox="0 0 4 8">
              <path d="M4 0v8L0 4z" fill="#c9ced4" />
            </svg>
          </Splitter>
        </MiddleColumn>

        <Canvas>
          <PlanDrawing />
          <SectionEditor />
        </Canvas>
      </Workspace>
    </Shell>
  );
}
